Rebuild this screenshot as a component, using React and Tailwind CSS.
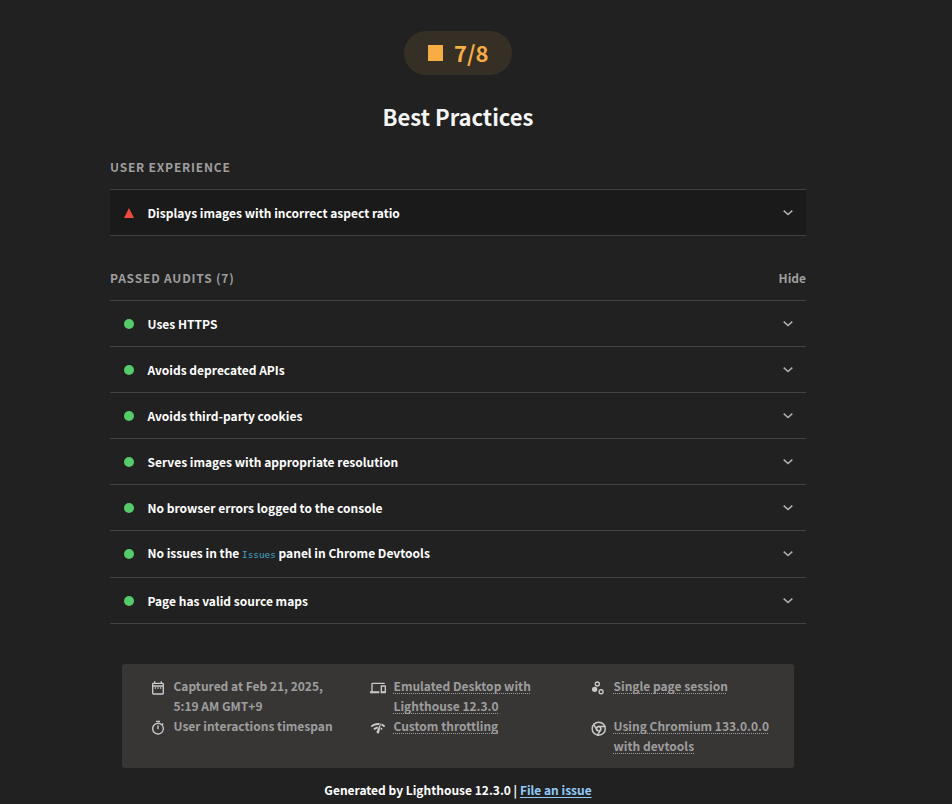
const passedAudits = [
  'Uses HTTPS',
  'Avoids deprecated APIs',
  'Avoids third-party cookies',
  'Serves images with appropriate resolution',
  'No browser errors logged to the console',
  <>
    No issues in the{' '}
    <code className="font-['DejaVu_Sans_Mono','Liberation_Mono',monospace] text-[9.35px] leading-none font-normal tracking-normal text-[#42a5c5]">
      Issues
    </code>{' '}
    panel in Chrome Devtools
  </>,
  'Page has valid source maps',
];

function Chevron() {
  return (
    <svg className="mr-[13px] h-[10px] w-[10px]" viewBox="0 0 10 10" fill="none" stroke="#b0b0b0" strokeWidth="1.5">
      <path d="M0.7 2.6 5 6.6 9.3 2.6" />
    </svg>
  );
}

function Audit({ children, failed = false, tall = false }) {
  return (
    <div
      className={`flex items-center border-b border-[#424242] ${tall ? 'h-[47px]' : 'h-[46px]'} ${failed ? 'bg-[#1a1a1a]' : ''}`}
    >
      {failed ? (
        <svg className="ml-[14px] h-[10px] w-[10px]" viewBox="0 0 10 10" fill="#eb4b38">
          <path d="M5 0 10 10H0z" />
        </svg>
      ) : (
        <span className="ml-[14px] h-[10px] w-[10px] rounded-full bg-[#55cb6b]" />
      )}
      <div className={`ml-[13.5px] flex-1 text-[12px] leading-5 text-white ${tall ? 'pb-[2px]' : ''}`}>{children}</div>
      <Chevron />
    </div>
  );
}

function Icon({ name }) {
  const shapes = {
    date: (
      <path d="M7 11h2v2H7v-2zm14-5v14a2 2 0 0 1-2 2H5a2 2 0 0 1-2-2V6c0-1.1.9-2 2-2h1V2h2v2h8V2h2v2h1a2 2 0 0 1 2 2zM5 8h14V6H5v2zm14 12V10H5v10h14zm-4-7h2v-2h-2v2zm-4 0h2v-2h-2v2z" />
    ),
    devices: (
      <path d="M4 6h18V4H4c-1.1 0-2 .9-2 2v11H0v3h14v-3H4V6zm19 2h-6c-.55 0-1 .45-1 1v10c0 .55.45 1 1 1h6c.55 0 1-.45 1-1V9c0-.55-.45-1-1-1zm-1 9h-4v-7h4v7z" />
    ),
    session: (
      <>
        <circle cx="7" cy="14" r="3" />
        <path d="M7 18a4 4 0 1 1 0-8 4 4 0 0 1 0 8zm0-6a2 2 0 1 0 0 4 2 2 0 0 0 0-4zm4-2a4 4 0 1 1 0-8 4 4 0 0 1 0 8zm0-6a2 2 0 1 0 0 4 2 2 0 0 0 0-4zm5.6 17.6a4 4 0 1 1 0-8 4 4 0 0 1 0 8zm0-6a2 2 0 1 0 0 4 2 2 0 0 0 0-4z" />
      </>
    ),
    stopwatch: (
      <path d="M15 1H9v2h6V1zm-4 13h2V8h-2v6zm8.1-6.6L20.5 6l-1.4-1.4L17.7 6A9 9 0 0 0 3 13a9 9 0 1 0 16-5.6zm-7 12.6a7 7 0 1 1 0-14 7 7 0 0 1 0 14z" />
    ),
    network: (
      <path d="M15.9 5c-.2 0-.3 0-.4.2v.2L10.1 17a2 2 0 0 0-.2 1 2 2 0 0 0 4 .4l2.4-12.9c0-.3-.2-.5-.5-.5zM1 9l2 2c2.9-2.9 6.8-4 10.5-3.6l1.2-2.7C10 3.8 4.7 5.3 1 9zm20 2 2-2a15.4 15.4 0 0 0-5.6-3.6L17 8.2c1.5.7 2.9 1.6 4.1 2.8zm-4 4 2-2a9.9 9.9 0 0 0-2.7-1.9l-.5 3 1.2.9zM5 13l2 2a7.1 7.1 0 0 1 4-2l1.3-2.9C9.7 10.1 7 11 5 13z" />
    ),
    chrome: (
      <>
        <path d="M256 25.6v25.6a204 204 0 0 1 144.8 60 204 204 0 0 1 60 144.8 204 204 0 0 1-60 144.8 204 204 0 0 1-144.8 60 204 204 0 0 1-144.8-60 204 204 0 0 1-60-144.8 204 204 0 0 1 60-144.8 204 204 0 0 1 144.8-60V0a256 256 0 1 0 0 512 256 256 0 0 0 0-512v25.6z" />
        <path d="M256 179.2v25.6a51.3 51.3 0 0 1 0 102.4 51.3 51.3 0 0 1 0-102.4v-51.2a102.3 102.3 0 1 0-.1 204.7 102.3 102.3 0 0 0 .1-204.7v25.6z" />
        <path d="M256 204.8h217.6a25.6 25.6 0 0 0 0-51.2H256a25.6 25.6 0 0 0 0 51.2m44.3 76.8L191.5 470.1a25.6 25.6 0 1 0 44.4 25.6l108.8-188.5a25.6 25.6 0 1 0-44.4-25.6m-88.6 0L102.9 93.2a25.7 25.7 0 0 0-35-9.4 25.7 25.7 0 0 0-9.4 35l108.8 188.5a25.7 25.7 0 0 0 35 9.4 25.9 25.9 0 0 0 9.4-35.1" />
      </>
    ),
  };
  return (
    <svg
      className="mt-[3.5px] h-4 w-4 shrink-0"
      viewBox={name === 'chrome' ? '-50 -50 562 562' : '0 0 24 24'}
      fill="#cacaca"
    >
      {shapes[name]}
    </svg>
  );
}

function Meta({ icon, lines, link = false }) {
  return (
    <li className="flex gap-[7.5px]">
      <Icon name={icon} />
      <div className="text-[12px] leading-5 whitespace-nowrap text-[#9e9e9e]">
        {lines.map((line) => (
          <div key={line}>
            <span
              className={link ? 'underline decoration-dotted decoration-1 underline-offset-2 [text-decoration-skip-ink:none]' : ''}
            >
              {line}
            </span>
          </div>
        ))}
      </div>
    </li>
  );
}

export default function App() {
  return (
    <div className="h-[804px] w-full overflow-hidden bg-[#212121] pt-[31px] font-['Noto_Sans_CJK_KR','Noto_Sans_CJK_JP',sans-serif] font-bold">
      <main className="flex w-[916px] flex-col items-center">
        <div className="flex h-11 w-[108px] items-center rounded-full bg-[#362f26] pl-6 text-[#f7ad44]">
          <span className="h-4 w-[15px] bg-[#f7ad44]" />
          <span className="ml-[11px] pb-[2px] text-[22px] leading-8">7/8</span>
        </div>
        <h1 className="mt-[23px] text-[22px] leading-9 text-[#f5f5f5]">Best Practices</h1>

        <section className="mt-[23px] w-[696px]">
          <h2 className="h-[33px] border-b border-[#424242] text-[12px] leading-5 tracking-[0.8px] text-[#9e9e9e]">
            USER EXPERIENCE
          </h2>
          <Audit failed>Displays images with incorrect aspect ratio</Audit>
        </section>

        <section className="mt-[31px] w-[696px]">
          <div className="flex h-[34px] justify-between border-b border-[#424242] text-[12px] leading-[21px] text-[#9e9e9e]">
            <h2 className="tracking-[0.8px]">PASSED AUDITS (7)</h2>
            <span>Hide</span>
          </div>
          {passedAudits.map((audit, i) => (
            <Audit key={i} tall={i === 5}>
              {audit}
            </Audit>
          ))}
        </section>

        <ul className="mt-10 grid h-[104px] w-[672px] grid-cols-[220px_220px_1fr] content-start rounded-[3px] bg-[#383635] pt-3 pl-7">
          <Meta icon="date" lines={['Captured at Feb 21, 2025,', '5:19 AM GMT+9']} />
          <Meta icon="devices" lines={['Emulated Desktop with', 'Lighthouse 12.3.0']} link />
          <Meta icon="session" lines={['Single page session']} link />
          <Meta icon="stopwatch" lines={['User interactions timespan']} />
          <Meta icon="network" lines={['Custom throttling']} link />
          <Meta icon="chrome" lines={['Using Chromium 133.0.0.0', 'with devtools']} link />
        </ul>
        <footer className="mt-3 text-[12px] leading-5 text-white">
          Generated by Lighthouse 12.3.0 |{' '}
          <a className="text-[#90caf9] underline underline-offset-2">File an issue</a>
        </footer>
      </main>
    </div>
  );
}
